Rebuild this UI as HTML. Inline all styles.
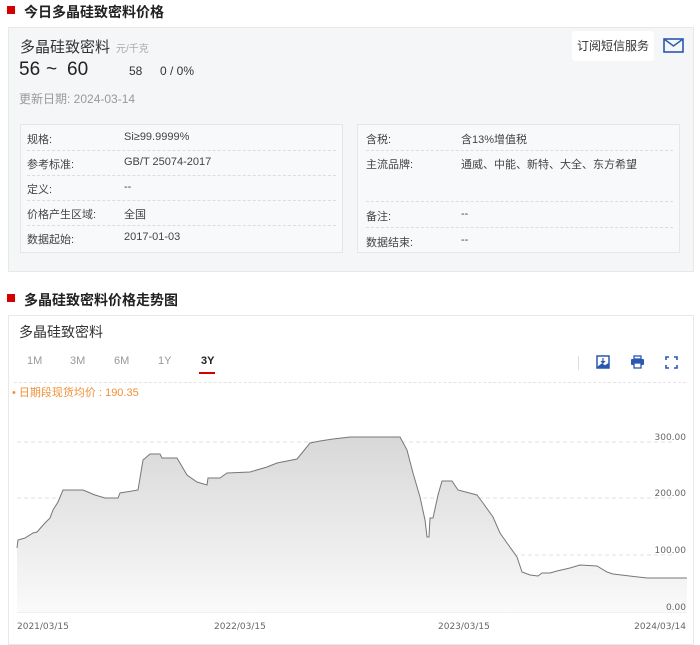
<!DOCTYPE html>
<html><head><meta charset="utf-8"><style>
*{margin:0;padding:0;box-sizing:border-box}
body{width:700px;height:637px;background:#fff;font-family:"Liberation Sans","Noto Sans CJK SC",sans-serif;position:relative;overflow:hidden;color:#333}
.a{position:absolute;white-space:nowrap}
.h{font-size:14px;font-weight:bold;color:#222}
.sq{position:absolute;width:8px;height:8px;background:#d40000}
.s{font-size:11px;color:#444}
.dl{position:absolute;border-top:1px dashed #ddd;height:0}
</style></head><body>
<div class="sq" style="left:7px;top:6px"></div>
<div class="a h" style="left:24px;top:2px">今日多晶硅致密料价格</div>
<div class="a" style="left:8px;top:27px;width:686px;height:245px;background:#f5f6f8;border:1px solid #e8e8e8"></div>
<div class="a" style="left:20px;top:36px;font-size:15px;color:#333">多晶硅致密料</div>
<div class="a" style="left:116px;top:40px;font-size:10px;color:#aaa">元/千克</div>
<div class="a" style="left:19px;top:59px;font-size:19px;color:#222">56</div>
<div class="a" style="left:46px;top:59px;font-size:19px;color:#222">~</div>
<div class="a" style="left:67px;top:59px;font-size:19px;color:#222">60</div>
<div class="a" style="left:129px;top:64px;font-size:12px;color:#333">58</div>
<div class="a" style="left:160px;top:64px;font-size:12px;color:#333">0 / 0%</div>
<div class="a" style="left:19px;top:90px;font-size:12px;color:#999">更新日期: 2024-03-14</div>
<div class="a" style="left:572px;top:31px;width:82px;height:30px;background:#fff;border-radius:3px;font-size:12px;line-height:30px;text-align:center;color:#333">订阅短信服务</div>
<svg class="a" style="left:663px;top:38px" width="21" height="15" viewBox="0 0 21 15"><rect x="1" y="1" width="19" height="13" fill="none" stroke="#2b58b0" stroke-width="1.6"/><path d="M1 1 L10.5 8 L20 1" fill="none" stroke="#2b58b0" stroke-width="1.4"/></svg>
<div class="a" style="left:20px;top:124px;width:323px;height:129px;background:#f8f9fa;border:1px solid #e6e6e6"></div>
<div class="a" style="left:357px;top:124px;width:323px;height:129px;background:#f8f9fa;border:1px solid #e6e6e6"></div>
<div class="a s" style="left:27px;top:131px">规格:</div><div class="a s" style="left:124px;top:131px">Si≥99.9999%</div>
<div class="dl" style="left:27px;top:150px;width:309px"></div>
<div class="a s" style="left:27px;top:156px">参考标准:</div><div class="a s" style="left:124px;top:156px">GB/T 25074-2017</div>
<div class="dl" style="left:27px;top:175px;width:309px"></div>
<div class="a s" style="left:27px;top:181px">定义:</div><div class="a s" style="left:124px;top:181px">--</div>
<div class="dl" style="left:27px;top:200px;width:309px"></div>
<div class="a s" style="left:27px;top:206px">价格产生区域:</div><div class="a s" style="left:124px;top:206px">全国</div>
<div class="dl" style="left:27px;top:225px;width:309px"></div>
<div class="a s" style="left:27px;top:231px">数据起始:</div><div class="a s" style="left:124px;top:231px">2017-01-03</div>
<div class="a s" style="left:366px;top:131px">含税:</div><div class="a s" style="left:461px;top:131px">含13%增值税</div>
<div class="dl" style="left:366px;top:150px;width:307px"></div>
<div class="a s" style="left:366px;top:156px">主流品牌:</div><div class="a s" style="left:461px;top:156px">通威、中能、新特、大全、东方希望</div>
<div class="dl" style="left:366px;top:201px;width:307px"></div>
<div class="a s" style="left:366px;top:208px">备注:</div><div class="a s" style="left:461px;top:208px">--</div>
<div class="dl" style="left:366px;top:227px;width:307px"></div>
<div class="a s" style="left:366px;top:234px">数据结束:</div><div class="a s" style="left:461px;top:234px">--</div>
<div class="sq" style="left:7px;top:294px"></div>
<div class="a h" style="left:24px;top:290px">多晶硅致密料价格走势图</div>
<div class="a" style="left:8px;top:315px;width:686px;height:330px;background:#fff;border:1px solid #e8e8e8"></div>
<div class="a" style="left:19px;top:322px;font-size:14px;color:#333">多晶硅致密料</div>
<div class="a" style="left:27px;top:355px;font-size:11px;color:#999">1M</div>
<div class="a" style="left:70px;top:355px;font-size:11px;color:#999">3M</div>
<div class="a" style="left:114px;top:355px;font-size:11px;color:#999">6M</div>
<div class="a" style="left:158px;top:355px;font-size:11px;color:#999">1Y</div>
<div class="a" style="left:201px;top:355px;font-size:11px;color:#222;font-weight:bold">3Y</div>
<div class="a" style="left:199px;top:372px;width:16px;height:2px;background:#d40000"></div>
<div class="a" style="left:578px;top:356px;width:1px;height:14px;background:#ddd"></div>
<svg class="a" style="left:596px;top:355px" width="14" height="14" viewBox="0 0 14 14"><rect x="1" y="1" width="12" height="12" fill="none" stroke="#2b58b0" stroke-width="1.5"/><path d="M7 3v5M5 6l2 2 2-2M2 12l4-3 3 2 3-2v3H2z" stroke="#2b58b0" fill="#2b58b0" stroke-width="1.2"/></svg>
<svg class="a" style="left:630px;top:355px" width="15" height="14" viewBox="0 0 15 14"><rect x="4" y="1" width="7" height="3" fill="none" stroke="#2b58b0" stroke-width="1.3"/><rect x="1" y="4" width="13" height="6" rx="1" fill="#2b58b0"/><rect x="4" y="8" width="7" height="5" fill="#fff" stroke="#2b58b0" stroke-width="1.3"/></svg>
<svg class="a" style="left:665px;top:356px" width="13" height="13" viewBox="0 0 13 13"><path d="M1 4V1h3M9 1h3v3M12 9v3H9M4 12H1V9" fill="none" stroke="#2b58b0" stroke-width="1.6"/></svg>
<div class="dl" style="left:14px;top:382px;width:672px;border-color:#e4e4e4"></div>
<div class="a" style="left:12px;top:384px;font-size:11px;color:#f0903a">• 日期段现货均价 : 190.35</div>
<svg class="a" style="left:0;top:0" width="700" height="637">
<defs><linearGradient id="g" x1="0" y1="0" x2="0" y2="1"><stop offset="0" stop-color="#d8d8d8"/><stop offset="1" stop-color="#fafafa"/></linearGradient></defs>
<g stroke="#e2e2e2" stroke-dasharray="4 3"><line x1="17" y1="442" x2="672" y2="442"/><line x1="17" y1="498" x2="672" y2="498"/><line x1="17" y1="555" x2="672" y2="555"/></g>
<line x1="17" y1="612" x2="687" y2="612" stroke="#e2e2e2"/>
<path d="M17 612 L17 548 L18 540 L25 538 L33 533 L37 532 L45 523 L50 518 L53 510 L58 502 L63 490 L83 490 L95 495 L105 498 L118 498 L120 493 L138 490 L143 460 L150 454 L160 454 L162 458 L177 458 L187 475 L197 482 L207 485 L208 478 L220 478 L227 473 L250 472 L267 467 L277 463 L297 459 L302 453 L310 443 L320 441 L333 439 L350 437 L400 437 L407 450 L413 473 L420 497 L425 520 L427 537 L429 537 L430 518 L433 518 L438 495 L442 481 L452 481 L458 490 L477 495 L483 503 L493 517 L500 533 L507 543 L517 557 L522 572 L530 575 L538 576 L542 573 L550 573 L557 571 L570 568 L580 565 L597 566 L607 572 L613 574 L647 578 L660 578 L687 578 L687 612 Z" fill="url(#g)" stroke="none"/>
<path d="M17 548 L18 540 L25 538 L33 533 L37 532 L45 523 L50 518 L53 510 L58 502 L63 490 L83 490 L95 495 L105 498 L118 498 L120 493 L138 490 L143 460 L150 454 L160 454 L162 458 L177 458 L187 475 L197 482 L207 485 L208 478 L220 478 L227 473 L250 472 L267 467 L277 463 L297 459 L302 453 L310 443 L320 441 L333 439 L350 437 L400 437 L407 450 L413 473 L420 497 L425 520 L427 537 L429 537 L430 518 L433 518 L438 495 L442 481 L452 481 L458 490 L477 495 L483 503 L493 517 L500 533 L507 543 L517 557 L522 572 L530 575 L538 576 L542 573 L550 573 L557 571 L570 568 L580 565 L597 566 L607 572 L613 574 L647 578 L660 578 L687 578" fill="none" stroke="#777" stroke-width="1"/>
<g font-family="DejaVu Sans,sans-serif" font-size="9" fill="#666">
<text x="686" y="440" text-anchor="end">300.00</text>
<text x="686" y="496" text-anchor="end">200.00</text>
<text x="686" y="553" text-anchor="end">100.00</text>
<text x="686" y="610" text-anchor="end">0.00</text>
<text x="17" y="629">2021/03/15</text>
<text x="214" y="629">2022/03/15</text>
<text x="438" y="629">2023/03/15</text>
<text x="686" y="629" text-anchor="end">2024/03/14</text>
</g>
</svg>
</body></html>
